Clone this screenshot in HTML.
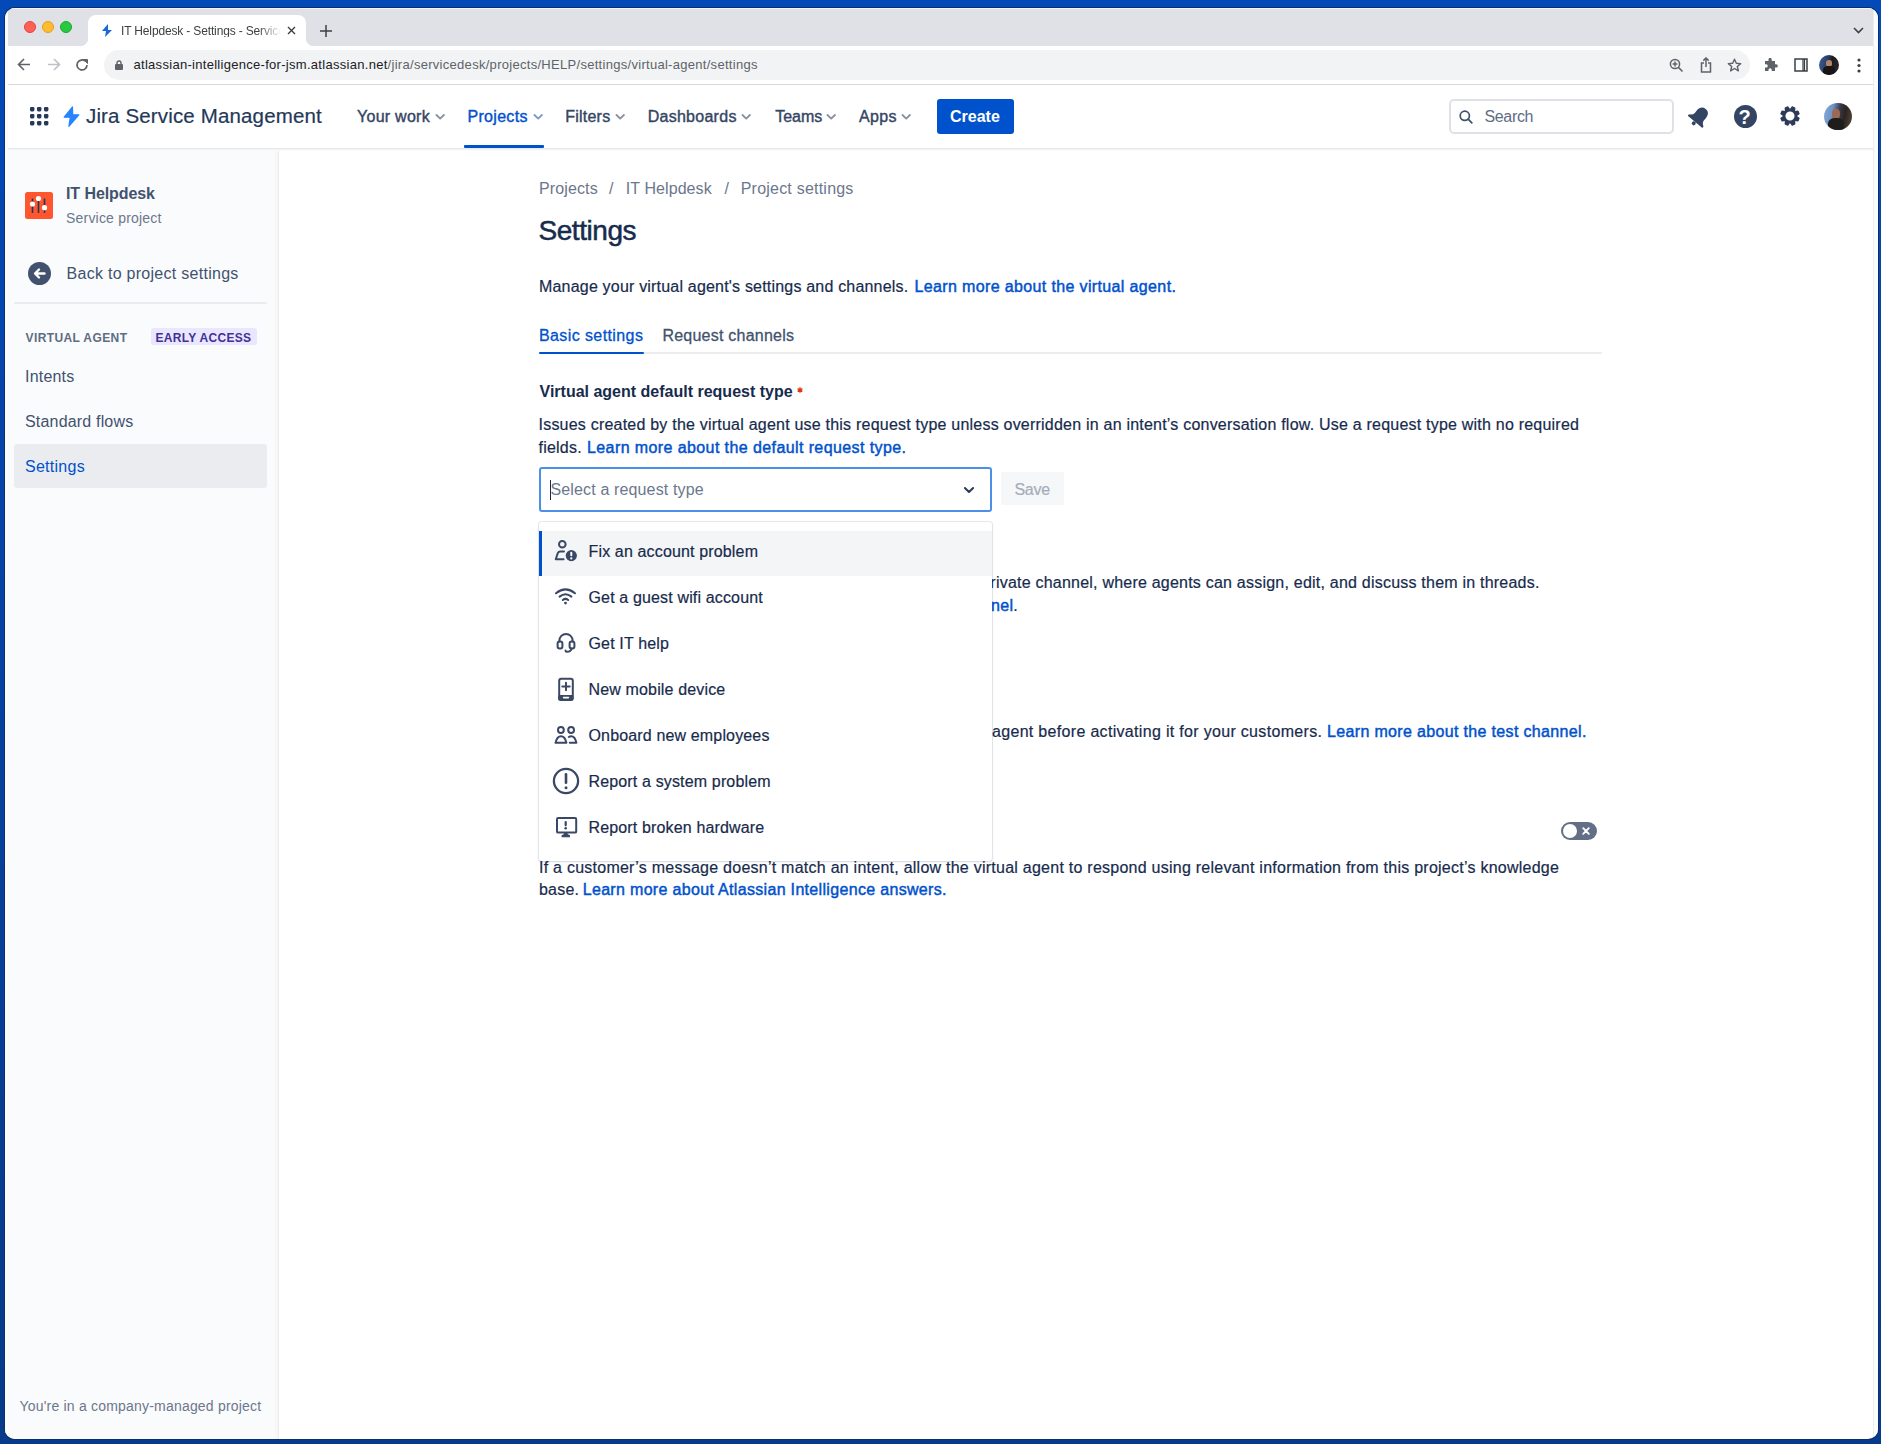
<!DOCTYPE html>
<html><head><meta charset="utf-8">
<style>
*{box-sizing:border-box;margin:0;padding:0}
html,body{width:1881px;height:1444px;overflow:hidden}
body{background:linear-gradient(#0449b8,#073a88);font-family:"Liberation Sans",sans-serif;position:relative;color:#172b4d}
.a{position:absolute;white-space:nowrap;line-height:1}
.r{position:absolute}
#win{position:absolute;left:0;top:0;width:1881px;height:1444px;background:#fff;clip-path:inset(8px 3px 5px 5px round 10px)}
#edge{position:absolute;left:4px;top:7px;width:1875px;height:1433px;border-radius:11px;background:#0b2f6e}
.t{font-size:16px;letter-spacing:.2px}
.nv{font-size:16px;color:#344563;letter-spacing:.2px;-webkit-text-stroke:.4px #344563}
.ch{position:absolute}
.b{font-size:16px;letter-spacing:.22px;color:#172b4d;-webkit-text-stroke:.2px #172b4d}
.lk{color:#0052cc;letter-spacing:.32px;-webkit-text-stroke:.45px #0052cc}
.bc{font-size:16px;color:#6b778c;letter-spacing:.15px}
.mi{font-size:16px;color:#172b4d;letter-spacing:.15px;-webkit-text-stroke:.2px #172b4d}

</style></head>
<body>
<div id="edge"></div>
<div id="win">
  <!-- tab strip -->
  <div class="r" style="left:0;top:0;width:1881px;height:46px;background:#dfe1e6"></div>
  <div class="r" style="left:5px;top:8px;width:1873px;height:1px;background:#f2f4f6"></div>
  <div class="r" style="left:24px;top:20.5px;width:12px;height:12px;border-radius:50%;background:#fe5f57;border:.5px solid #e2463f"></div>
  <div class="r" style="left:42px;top:20.5px;width:12px;height:12px;border-radius:50%;background:#febc2e;border:.5px solid #e1a116"></div>
  <div class="r" style="left:60px;top:20.5px;width:12px;height:12px;border-radius:50%;background:#28c840;border:.5px solid #1aab29"></div>
  <div class="r" style="left:88px;top:15px;width:218px;height:31px;background:#fff;border-radius:8px 8px 0 0"></div>
  <div class="r" style="left:80px;top:38px;width:8px;height:8px;background:radial-gradient(circle at 0 0,#dfe1e6 8px,#fff 8.5px)"></div>
  <div class="r" style="left:306px;top:38px;width:8px;height:8px;background:radial-gradient(circle at 100% 0,#dfe1e6 8px,#fff 8.5px)"></div>
  <svg class="r" style="left:101px;top:24px" width="12" height="13" viewBox="0 0 12 13"><path d="M7 0 L1 7 H5 L4 13 L11 6 H7 Z" fill="#1868db"/></svg>
  <div class="a" style="left:121px;top:25px;font-size:12px;color:#3c4043;letter-spacing:-.15px;width:160px;overflow:hidden;-webkit-mask-image:linear-gradient(90deg,#000 86%,transparent 100%)">IT Helpdesk - Settings - Service Management</div>
  <svg class="r" style="left:287px;top:26px" width="9" height="9" viewBox="0 0 9 9"><path d="M1 1L8 8M8 1L1 8" stroke="#3c4043" stroke-width="1.4"/></svg>
  <svg class="r" style="left:320px;top:25px" width="12" height="12" viewBox="0 0 12 12"><path d="M6 0V12M0 6H12" stroke="#3c4043" stroke-width="1.5"/></svg>
  <svg class="r" style="left:1853px;top:27px" width="11" height="7" viewBox="0 0 11 7"><path d="M1 1L5.5 5.5L10 1" fill="none" stroke="#3c4043" stroke-width="1.6"/></svg>
  <!-- toolbar -->
  <div class="r" style="left:0;top:46px;width:1881px;height:39px;background:#fff;border-bottom:1px solid #d7d9dc"></div>
  <svg class="r" style="left:17px;top:58px" width="14" height="13" viewBox="0 0 14 13"><path d="M13 6.5H1.5M7 1L1.5 6.5L7 12" fill="none" stroke="#5f6368" stroke-width="1.6"/></svg>
  <svg class="r" style="left:47px;top:58px" width="14" height="13" viewBox="0 0 14 13"><path d="M1 6.5H12.5M7 1L12.5 6.5L7 12" fill="none" stroke="#bdc1c6" stroke-width="1.6"/></svg>
  <svg class="r" style="left:75px;top:58px" width="14" height="14" viewBox="0 0 14 14"><path d="M12 7A5 5 0 1 1 10.3 3.2" fill="none" stroke="#5f6368" stroke-width="1.7"/><path d="M8.5 1.5H12.5V5.5Z" fill="#5f6368" stroke="#5f6368" stroke-width="1"/></svg>
  <div class="r" style="left:104px;top:50px;width:1646px;height:30px;border-radius:15px;background:#f1f3f4"></div>
  <svg class="r" style="left:115px;top:60px" width="8" height="10" viewBox="0 0 8 10"><rect x="0" y="4" width="8" height="6" rx="1" fill="#5f6368"/><path d="M2 4.5V3A2 2 0 0 1 6 3V4.5" fill="none" stroke="#5f6368" stroke-width="1.4"/></svg>
  <div class="a" style="left:133.5px;top:58px;font-size:13px;letter-spacing:.29px;color:#202124">atlassian-intelligence-for-jsm.atlassian.net<span style="color:#5f6368">/jira/servicedesk/projects/HELP/settings/virtual-agent/settings</span></div>
  <svg class="r" style="left:1669px;top:58px" width="15" height="15" viewBox="0 0 15 15"><circle cx="6" cy="6" r="4.6" fill="none" stroke="#5f6368" stroke-width="1.5"/><path d="M9.4 9.4L13.5 13.5M6 3.6V8.4M3.6 6H8.4" stroke="#5f6368" stroke-width="1.5"/></svg>
  <svg class="r" style="left:1700px;top:57px" width="12" height="16" viewBox="0 0 12 16"><path d="M4 6H1.5V15H10.5V6H8" fill="none" stroke="#5f6368" stroke-width="1.5"/><path d="M6 1V10M3.3 3.6L6 1L8.7 3.6" fill="none" stroke="#5f6368" stroke-width="1.5"/></svg>
  <svg class="r" style="left:1727px;top:58px" width="15" height="15" viewBox="0 0 15 15"><path d="M7.5 1.2L9.3 5.3L13.7 5.6L10.3 8.5L11.4 12.9L7.5 10.5L3.6 12.9L4.7 8.5L1.3 5.6L5.7 5.3Z" fill="none" stroke="#5f6368" stroke-width="1.4" stroke-linejoin="round"/></svg>
  <svg class="r" style="left:1763px;top:58px" width="15" height="15" viewBox="0 0 15 15"><path d="M5.5 1.5A1.6 1.6 0 0 1 8.7 1.5V3H12V6.3H13.2A1.6 1.6 0 0 1 13.2 9.5H12V13H8.7V11.8A1.6 1.6 0 0 0 5.5 11.8V13H2V9.5H3.2A1.6 1.6 0 0 0 3.2 6.3H2V3H5.5Z" fill="#5f6368"/></svg>
  <svg class="r" style="left:1794px;top:58px" width="14" height="14" viewBox="0 0 14 14"><rect x="1" y="1" width="12" height="12" fill="none" stroke="#3c4043" stroke-width="1.5"/><path d="M9 1V13M10.5 1V13" stroke="#3c4043" stroke-width="1.2"/></svg>
  <div class="r" style="left:1819px;top:55px;width:20px;height:20px;border-radius:50%;overflow:hidden;background:linear-gradient(100deg,#3f5f95 0%,#2a3f6a 40%,#1e1a1c 60%,#2d2626 100%)"><div style="position:absolute;left:7px;top:5px;width:6px;height:7px;border-radius:45%;background:#b5846a"></div><div style="position:absolute;left:4px;top:11px;width:12px;height:10px;border-radius:40% 40% 0 0;background:#181516"></div></div>
  <svg class="r" style="left:1857px;top:58px" width="4" height="15" viewBox="0 0 4 15"><circle cx="2" cy="2" r="1.6" fill="#3c4043"/><circle cx="2" cy="7.5" r="1.6" fill="#3c4043"/><circle cx="2" cy="13" r="1.6" fill="#3c4043"/></svg>


  <div class="r" style="left:0;top:85px;width:1881px;height:63px;background:#fff"></div>
  <div class="r" style="left:0;top:148px;width:1881px;height:1px;background:#e6e8ec"></div>
  <div class="r" style="left:0;top:149px;width:1881px;height:2px;background:linear-gradient(rgba(9,30,66,.07),rgba(9,30,66,0))"></div>
  <svg class="r" style="left:30px;top:107px" width="19" height="19" viewBox="0 0 19 19" fill="#253858"><rect x="0" y="0" width="4.4" height="4.4" rx="1.3"/><rect x="7" y="0" width="4.4" height="4.4" rx="1.3"/><rect x="14" y="0" width="4.4" height="4.4" rx="1.3"/><rect x="0" y="7" width="4.4" height="4.4" rx="1.3"/><rect x="7" y="7" width="4.4" height="4.4" rx="1.3"/><rect x="14" y="7" width="4.4" height="4.4" rx="1.3"/><rect x="0" y="14" width="4.4" height="4.4" rx="1.3"/><rect x="7" y="14" width="4.4" height="4.4" rx="1.3"/><rect x="14" y="14" width="4.4" height="4.4" rx="1.3"/></svg>
  <svg class="r" style="left:63px;top:106px" width="17" height="21" viewBox="0 0 17 21"><path d="M9.5 0.8L1.2 11.2H7.3L5.9 20.3L15.8 8.8H9.7Z" fill="#2684ff" stroke="#2684ff" stroke-width="1.2" stroke-linejoin="round"/></svg>
  <div class="a" style="left:86px;top:106px;font-size:20.5px;color:#253858;letter-spacing:.15px;-webkit-text-stroke:.2px #253858">Jira Service Management</div>
  <div class="a nv" style="left:357px;top:109.2px;letter-spacing:.27px">Your work</div><svg class="r" style="left:434.5px;top:113px" width="11" height="8" viewBox="0 0 11 8"><path d="M1.5 2L5.2 5.6L8.9 2" fill="none" stroke="#8993a4" stroke-width="1.9" stroke-linecap="round" stroke-linejoin="round"/></svg>
  <div class="a nv" style="left:467.5px;top:109.2px;color:#0052cc;-webkit-text-stroke:.4px #0052cc;letter-spacing:.3px">Projects</div><svg class="r" style="left:532.5px;top:113px" width="11" height="8" viewBox="0 0 11 8"><path d="M1.5 2L5.2 5.6L8.9 2" fill="none" stroke="#7a9ad6" stroke-width="1.9" stroke-linecap="round" stroke-linejoin="round"/></svg>
  <div class="r" style="left:464px;top:145px;width:80px;height:3px;background:#0052cc;border-radius:1px"></div>
  <div class="a nv" style="left:565.3px;top:109.2px;letter-spacing:.22px">Filters</div><svg class="r" style="left:615px;top:113px" width="11" height="8" viewBox="0 0 11 8"><path d="M1.5 2L5.2 5.6L8.9 2" fill="none" stroke="#8993a4" stroke-width="1.9" stroke-linecap="round" stroke-linejoin="round"/></svg>
  <div class="a nv" style="left:647.7px;top:109.2px;letter-spacing:.27px">Dashboards</div><svg class="r" style="left:740.5px;top:113px" width="11" height="8" viewBox="0 0 11 8"><path d="M1.5 2L5.2 5.6L8.9 2" fill="none" stroke="#8993a4" stroke-width="1.9" stroke-linecap="round" stroke-linejoin="round"/></svg>
  <div class="a nv" style="left:775.2px;top:109.2px;letter-spacing:0px">Teams</div><svg class="r" style="left:825.5px;top:113px" width="11" height="8" viewBox="0 0 11 8"><path d="M1.5 2L5.2 5.6L8.9 2" fill="none" stroke="#8993a4" stroke-width="1.9" stroke-linecap="round" stroke-linejoin="round"/></svg>
  <div class="a nv" style="left:859px;top:109.2px;letter-spacing:.38px">Apps</div><svg class="r" style="left:900.5px;top:113px" width="11" height="8" viewBox="0 0 11 8"><path d="M1.5 2L5.2 5.6L8.9 2" fill="none" stroke="#8993a4" stroke-width="1.9" stroke-linecap="round" stroke-linejoin="round"/></svg>
  <div class="r" style="left:936.5px;top:98.5px;width:77px;height:35.5px;background:#0052cc;border-radius:3px"></div>
  <div class="a" style="left:950px;top:109.2px;font-size:16px;font-weight:700;color:#fff">Create</div>
  <div class="r" style="left:1448.5px;top:99px;width:225px;height:35px;border:2px solid #dfe1e6;border-radius:5px;background:#fff"></div>
  <svg class="r" style="left:1459px;top:110px" width="14" height="14" viewBox="0 0 14 14"><circle cx="5.8" cy="5.8" r="4.6" fill="none" stroke="#42526e" stroke-width="1.7"/><path d="M9.2 9.2L12.8 12.8" stroke="#42526e" stroke-width="1.8" stroke-linecap="round"/></svg>
  <div class="a" style="left:1484.5px;top:108.5px;font-size:16px;color:#5e6c84;letter-spacing:-.35px">Search</div>
  <svg class="r" style="left:1687px;top:104px" width="25" height="25" viewBox="0 0 25 25"><g transform="rotate(40 12.5 12.5)"><path d="M12.5 2.8C8.6 2.8 6.6 5.6 6.6 9.4V12.8Q6.6 15.6 3 17.6V19.4H22V17.6Q18.4 15.6 18.4 12.8V9.4C18.4 5.6 16.4 2.8 12.5 2.8Z" fill="#344563"/><circle cx="12.5" cy="21.4" r="2" fill="#344563"/></g></svg>
  <div class="r" style="left:1733.5px;top:105px;width:23px;height:23px;border-radius:50%;background:#344563"></div>
  <div class="a" style="left:1738.5px;top:107px;font-size:20px;font-weight:700;color:#fff">?</div>
  <svg class="r" style="left:1778px;top:104.2px" width="24" height="24" viewBox="0 0 24 24"><path fill="#2c3b58" stroke="#2c3b58" stroke-width="1.3" stroke-linejoin="round" fill-rule="evenodd" d="M18.59 12.41L21.03 14.24L19.96 16.80L16.95 16.37L16.37 16.95L16.80 19.96L14.24 21.03L12.41 18.59L11.59 18.59L9.76 21.03L7.20 19.96L7.63 16.95L7.05 16.37L4.04 16.80L2.97 14.24L5.41 12.41L5.41 11.59L2.97 9.76L4.04 7.20L7.05 7.63L7.63 7.05L7.20 4.04L9.76 2.97L11.59 5.41L12.41 5.41L14.24 2.97L16.80 4.04L16.37 7.05L16.95 7.63L19.96 7.20L21.03 9.76L18.59 11.59ZM17.2 12A5.2 5.2 0 1 0 6.8 12A5.2 5.2 0 1 0 17.2 12Z"/></svg>
  <div class="r" style="left:1824px;top:102.5px;width:27.5px;height:27.5px;border-radius:50%;overflow:hidden;background:linear-gradient(100deg,#86acd9 0%,#6f93c4 30%,#3a3a44 52%,#2a2420 70%,#5a4a40 100%)"><div style="position:absolute;left:8px;top:6px;width:8px;height:10px;border-radius:45%;background:#9a6a55"></div><div style="position:absolute;left:4px;top:15px;width:16px;height:14px;border-radius:40% 40% 0 0;background:#1f1c1c"></div></div>


  <div class="r" style="left:0;top:151px;width:273px;height:1300px;background:#fafbfc"></div>
  <div class="r" style="left:273px;top:151px;width:5px;height:1300px;background:linear-gradient(90deg,#fafbfc,#f6f6f6)"></div>
  <div class="r" style="left:278px;top:151px;width:1px;height:1300px;background:#ebecee"></div>
  <div class="r" style="left:25px;top:192px;width:27.5px;height:27px;border-radius:2.5px;background:#ff5630"></div>
  <svg class="r" style="left:25px;top:192px" width="28" height="27" viewBox="0 0 28 27"><path d="M7.5 6.5V21M13.5 5V21M19.5 6.5V21" stroke="#253858" stroke-width="1.6"/><circle cx="7.5" cy="12" r="2.6" fill="#fff"/><circle cx="13.5" cy="6.5" r="2.6" fill="#fff"/><circle cx="19.5" cy="15.7" r="2.6" fill="#fff"/></svg>
  <div class="a" style="left:66px;top:186.2px;font-size:16px;font-weight:700;color:#42526e;letter-spacing:-.08px">IT Helpdesk</div>
  <div class="a" style="left:66px;top:210.9px;font-size:14px;color:#6b778c;letter-spacing:.2px">Service project</div>
  <div class="r" style="left:27.5px;top:261.5px;width:23px;height:23px;border-radius:50%;background:#42526e"></div>
  <svg class="r" style="left:27.5px;top:261.5px" width="23" height="23" viewBox="0 0 23 23"><path d="M16.5 11.5H7.5M11 7.5L7 11.5L11 15.5" fill="none" stroke="#fff" stroke-width="2.4" stroke-linecap="round" stroke-linejoin="round"/></svg>
  <div class="a nv" style="left:66.5px;top:266.1px;letter-spacing:.28px;-webkit-text-stroke:0;color:#42526e">Back to project settings</div>
  <div class="r" style="left:14px;top:302px;width:253px;height:2px;background:#ebecf0;border-radius:1px"></div>
  <div class="a" style="left:25.5px;top:331.9px;font-size:12px;font-weight:700;color:#5e6c84;letter-spacing:.4px">VIRTUAL AGENT</div>
  <div class="r" style="left:150.5px;top:328px;width:106px;height:17px;border-radius:3px;background:#eae6ff"></div>
  <div class="a" style="left:155.5px;top:331.9px;font-size:12px;font-weight:700;color:#403294;letter-spacing:.3px">EARLY ACCESS</div>
  <div class="a nv" style="left:25px;top:368.5px;-webkit-text-stroke:0;color:#42526e;letter-spacing:.2px">Intents</div>
  <div class="a nv" style="left:25px;top:413.9px;-webkit-text-stroke:0;color:#42526e;letter-spacing:.18px">Standard flows</div>
  <div class="r" style="left:14px;top:443.5px;width:252.5px;height:44px;border-radius:3px;background:#ebecf0"></div>
  <div class="a nv" style="left:25px;top:459.4px;-webkit-text-stroke:0;color:#0052cc;letter-spacing:.27px">Settings</div>
  <div class="a" style="left:19.5px;top:1398.9px;font-size:14px;color:#6b778c;letter-spacing:.2px">You're in a company-managed project</div>


  <div class="a bc" style="left:539px;top:181.4px;letter-spacing:.12px">Projects</div>
  <div class="a bc" style="left:609px;top:181.4px">/</div>
  <div class="a bc" style="left:625.8px;top:181.4px;letter-spacing:.08px">IT Helpdesk</div>
  <div class="a bc" style="left:724.5px;top:181.4px">/</div>
  <div class="a bc" style="left:740.7px;top:181.4px;letter-spacing:.22px">Project settings</div>
  <div class="a" style="left:538.5px;top:217.2px;font-size:28px;color:#172b4d;letter-spacing:-.45px;-webkit-text-stroke:.5px #172b4d">Settings</div>
  <div class="a b" style="left:539px;top:279.2px;letter-spacing:.193px">Manage your virtual agent's settings and channels.</div>
  <div class="a b lk" style="left:914.5px;top:279.2px;letter-spacing:.363px">Learn more about the virtual agent.</div>
  <div class="a" style="left:539px;top:327.6px;font-size:16px;color:#0052cc;letter-spacing:.4px;-webkit-text-stroke:.3px #0052cc">Basic settings</div>
  <div class="a" style="left:662.4px;top:327.6px;font-size:16px;color:#42526e;letter-spacing:.234px;-webkit-text-stroke:.3px #42526e">Request channels</div>
  <div class="r" style="left:539px;top:351.5px;width:1063px;height:2px;background:#ebecf0;border-radius:1px"></div>
  <div class="r" style="left:539px;top:351.5px;width:105px;height:2.5px;background:#0052cc;border-radius:1px"></div>
  <div class="a" style="left:539.5px;top:384.2px;font-size:16px;font-weight:700;color:#172b4d;letter-spacing:0px">Virtual agent default request type</div>
  <svg class="r" style="left:796.5px;top:387px" width="6" height="6" viewBox="0 0 6 6"><path d="M3 0.3V5.7M0.6 1.6L5.4 4.4M5.4 1.6L0.6 4.4" stroke="#de350b" stroke-width="1.3"/></svg>
  <div class="a b" style="left:538.5px;top:417.4px;letter-spacing:.217px">Issues created by the virtual agent use this request type unless overridden in an intent’s conversation flow. Use a request type with no required</div>
  <div class="a b" style="left:538.5px;top:439.8px">fields.</div>
  <div class="a b lk" style="left:587px;top:439.8px;letter-spacing:.404px">Learn more about the default request type.</div>
  <div class="r" style="left:539px;top:467px;width:452.5px;height:45px;border:2px solid #4c8fe8;border-radius:3px;background:#fff"></div>
  <div class="r" style="left:549.5px;top:480px;width:1.3px;height:20px;background:#172b4d"></div>
  <div class="a" style="left:550.5px;top:481.9px;font-size:16px;color:#6b778c;letter-spacing:.14px">Select a request type</div>
  <svg class="r" style="left:963px;top:486px" width="12" height="8" viewBox="0 0 12 8"><path d="M1.9 2L6 6L10.1 2" fill="none" stroke="#2c3a55" stroke-width="2" stroke-linecap="round" stroke-linejoin="round"/></svg>
  <div class="r" style="left:1000.5px;top:472px;width:63.5px;height:32.5px;border-radius:2px;background:#f6f7f9"></div>
  <div class="a" style="left:1014.4px;top:482.4px;font-size:16px;color:#a5adba;letter-spacing:-.2px;-webkit-text-stroke:.2px #a5adba">Save</div>

  <!-- background texts (partially covered by menu) -->
  <div class="a b" style="left:auto;right:341.4px;top:575.4px">with a private channel, where agents can assign, edit, and discuss them in threads.</div>
  <div class="a b" style="left:auto;right:863px;top:597.6px"><span class="lk">Learn more about the triage channel</span>.</div>
  <div class="a b" style="left:992px;top:724.1px;letter-spacing:.315px">agent before activating it for your customers.</div>
  <div class="a b lk" style="left:1327px;top:724.1px;letter-spacing:.34px">Learn more about the test channel.</div>
  <div class="a b" style="left:auto;right:889px;top:724.1px">the virtual</div>
  <div class="r" style="left:1560.5px;top:822px;width:36px;height:18px;border-radius:9px;background:#626f86"></div>
  <div class="r" style="left:1562.5px;top:824px;width:14px;height:14px;border-radius:50%;background:#fff"></div>
  <svg class="r" style="left:1580.7px;top:826px" width="10" height="10" viewBox="0 0 10 10"><path d="M2.2 2.2L7.8 7.8M7.8 2.2L2.2 7.8" stroke="#fff" stroke-width="1.9" stroke-linecap="round"/></svg>
  <div class="a b" style="left:539px;top:859.7px;letter-spacing:.248px">If a customer’s message doesn’t match an intent, allow the virtual agent to respond using relevant information from this project’s knowledge</div>
  <div class="a b" style="left:539px;top:882.1px">base.</div>
  <div class="a b lk" style="left:582.7px;top:882.1px;letter-spacing:.322px">Learn more about Atlassian Intelligence answers.</div>

  <!-- dropdown menu -->
  <div class="r" style="left:539px;top:521.5px;width:453px;height:339.5px;background:#fff;border-radius:3px;box-shadow:0 0 0 1px rgba(9,30,66,.09),0 1px 3px rgba(9,30,66,.10)"></div>
  <div class="r" style="left:539px;top:530.5px;width:453px;height:45.5px;background:#f4f5f7"></div>
  <div class="r" style="left:539px;top:530.5px;width:3px;height:45.5px;background:#0052cc"></div>
  <div class="a mi" style="left:588.5px;top:543.6px">Fix an account problem</div>
  <div class="a mi" style="left:588.5px;top:589.7px">Get a guest wifi account</div>
  <div class="a mi" style="left:588.5px;top:635.8px">Get IT help</div>
  <div class="a mi" style="left:588.5px;top:681.9px">New mobile device</div>
  <div class="a mi" style="left:588.5px;top:728.0px">Onboard new employees</div>
  <div class="a mi" style="left:588.5px;top:774.1px">Report a system problem</div>
  <div class="a mi" style="left:588.5px;top:820.2px">Report broken hardware</div>

  <svg class="r" style="left:0;top:0" width="1881" height="1444" viewBox="0 0 1881 1444">
   <g fill="none" stroke="#3a4866" stroke-width="2" stroke-linecap="round" stroke-linejoin="round">
    <!-- account problem -->
    <circle cx="562.3" cy="544.3" r="3.3"/>
    <path d="M564 551.6H560.2Q558.6 551.6 557.7 553.2L555.8 559.3H563.6"/>
    <!-- wifi -->
    <path d="M556 593.3Q565.5 585.5 575 593.3"/>
    <path d="M559.6 596.6Q565.5 591.9 571.4 596.6"/>
    <path d="M562.8 600Q565.5 597.8 568.2 600"/>
    <!-- headset -->
    <path d="M559.4 641.5V640.5A6.6 6.6 0 0 1 572.6 640.5V641.5"/>
    <rect x="557.6" y="641.6" width="4.8" height="6.8" rx="2"/>
    <rect x="569.6" y="641.6" width="4.8" height="6.8" rx="2"/>
    <path d="M571.5 648.6Q571 651.8 566.8 651.8Q565.5 651.8 565.5 650.4"/>
    <!-- mobile -->
    <rect x="559.2" y="678.7" width="13.6" height="21.2" rx="2"/>
    <path d="M566 682.8V690.3M562.3 686.5H569.7"/>
    <!-- people -->
    <circle cx="560.9" cy="730" r="2.9"/>
    <circle cx="571.1" cy="730" r="2.9"/>
    <path d="M555.5 742.8Q557 736.3 561 736.3Q565 736.3 566.4 742.8Z"/>
    <path d="M568.8 737Q569.8 736.3 571.1 736.3Q575 736.3 576.4 742.8H569.8"/>
    <!-- alert circle -->
    <circle cx="566" cy="781" r="12.1" stroke-width="2.3"/>
    <path d="M566 774.3V782.7" stroke-width="2.6"/>
    <!-- monitor -->
    <rect x="557" y="818" width="19.2" height="14.6" rx="1.2"/>
    <path d="M565.7 822V825.3" stroke-width="2.2"/>
   </g>
   <g fill="#3a4866">
    <circle cx="571.3" cy="555.6" r="5.6"/>
    <circle cx="565.5" cy="603.1" r="1.4"/>
    <rect x="558.2" y="695" width="15.2" height="5.6" rx="1.5"/>
    <circle cx="566" cy="787.7" r="1.5"/>
    <circle cx="565.7" cy="828.3" r="1.3"/>
    <path d="M564.3 832.6H567.3L567.8 834.3L570 835.2V837.2H561.6V835.2L563.8 834.3Z"/>
   </g>
   <g fill="#fff">
    <rect x="570.3" y="551.7" width="2" height="4.6" rx="1"/>
    <circle cx="571.3" cy="558.4" r="1.1"/>
    <rect x="562.8" y="696.8" width="6.4" height="1.6" rx=".8"/>
   </g>
  </svg>


  <div class="r" style="left:1873px;top:8px;width:1px;height:1440px;background:#eceeef"></div>
  <div class="r" style="left:1874px;top:8px;width:4px;height:1440px;background:#fbfcfc"></div>
  <div class="r" style="left:5px;top:8px;width:3px;height:1440px;background:#fbfcfd"></div>
</div>
</body></html>
